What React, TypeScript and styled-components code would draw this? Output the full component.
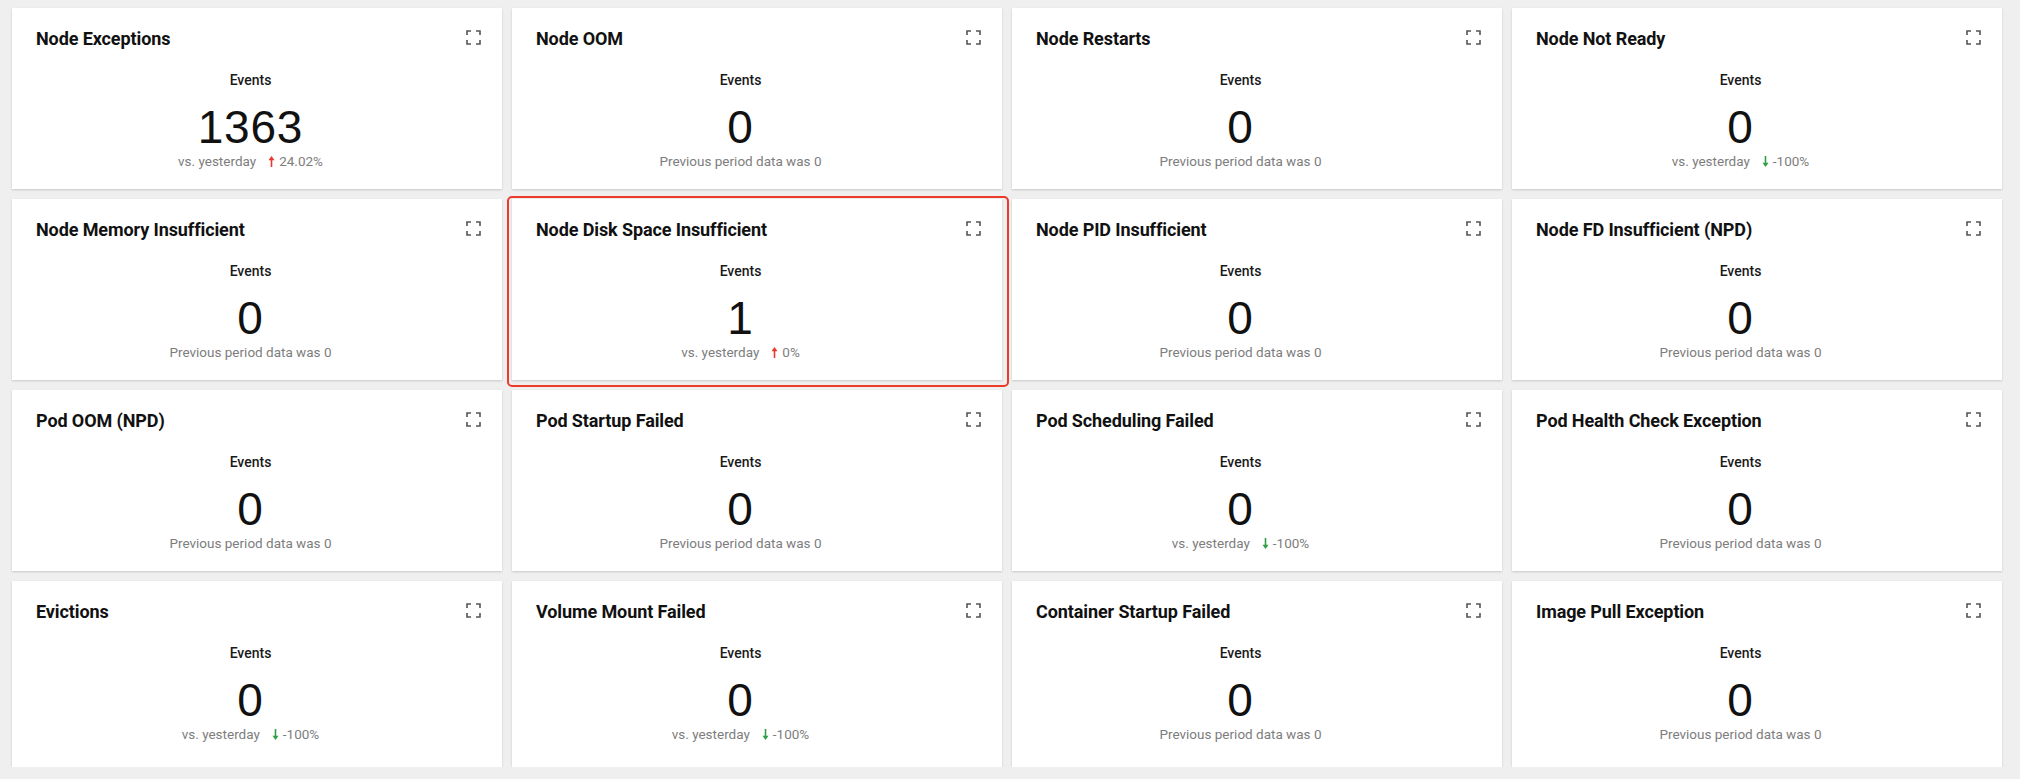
import React from "react";
import styled, { createGlobalStyle } from "styled-components";

const GlobalStyle = createGlobalStyle`
  html, body { margin: 0; padding: 0; background: #efefef; }
  body { font-family: Roboto, "Noto Sans", sans-serif; }
`;

type Trend = "up" | "down";

interface Metric {
  title: string;
  value: string;
  trend?: Trend;
  change?: string;
  highlight?: boolean;
}

const rows: Metric[][] = [
  [
    { title: "Node Exceptions", value: "1363", trend: "up", change: "24.02%" },
    { title: "Node OOM", value: "0" },
    { title: "Node Restarts", value: "0" },
    { title: "Node Not Ready", value: "0", trend: "down", change: "-100%" },
  ],
  [
    { title: "Node Memory Insufficient", value: "0" },
    { title: "Node Disk Space Insufficient", value: "1", trend: "up", change: "0%", highlight: true },
    { title: "Node PID Insufficient", value: "0" },
    { title: "Node FD Insufficient (NPD)", value: "0" },
  ],
  [
    { title: "Pod OOM (NPD)", value: "0" },
    { title: "Pod Startup Failed", value: "0" },
    { title: "Pod Scheduling Failed", value: "0", trend: "down", change: "-100%" },
    { title: "Pod Health Check Exception", value: "0" },
  ],
  [
    { title: "Evictions", value: "0", trend: "down", change: "-100%" },
    { title: "Volume Mount Failed", value: "0", trend: "down", change: "-100%" },
    { title: "Container Startup Failed", value: "0" },
    { title: "Image Pull Exception", value: "0" },
  ],
];

const Grid = styled.div`
  display: grid;
  grid-template-columns: repeat(4, 490px);
  grid-template-rows: 181px 181px 181px 186px;
  column-gap: 10px;
  row-gap: 10px;
  padding: 8px 18px 0 12px;
`;

const Card = styled.div`
  position: relative;
  background: #ffffff;
  box-shadow: 0 1px 2px rgba(0, 0, 0, 0.16);
  display: flex;
  flex-direction: column;
  padding: 19px 21px 0 24px;
`;

const Highlight = styled.div`
  position: absolute;
  top: -3px;
  left: -5px;
  right: -7px;
  bottom: -7px;
  border: 2.5px solid #ec3b2b;
  border-radius: 5px;
  pointer-events: none;
`;

const Header = styled.div`
  display: flex;
  align-items: center;
  justify-content: space-between;
  height: 24px;
`;

const Title = styled.div`
  font-family: Roboto, "Noto Sans", sans-serif;
  font-weight: 700;
  font-size: 18px;
  line-height: 24px;
  color: #111;
  letter-spacing: -0.1px;
`;

const ExpandButton = styled.span`
  display: flex;
  width: 15px;
  height: 15px;
  margin-top: -3px;
  color: #555;
`;

const Body = styled.div<{ $shift: number }>`
  display: flex;
  flex-direction: column;
  align-items: center;
  padding-right: ${(p) => p.$shift}px;
`;

const Label = styled.div`
  margin-top: 20px;
  font-family: Roboto, "Noto Sans", sans-serif;
  font-weight: 500;
  font-size: 14px;
  line-height: 18px;
  color: #1a1a1a;
`;

const Value = styled.div`
  margin-top: 14px;
  font-family: "Liberation Sans", Arial, sans-serif;
  font-size: 46px;
  line-height: 48px;
  letter-spacing: 0.8px;
  color: #111;
`;

const Sub = styled.div`
  margin-top: 2px;
  display: flex;
  align-items: center;
  font-family: Roboto, "Noto Sans", sans-serif;
  font-size: 13.5px;
  line-height: 16px;
  color: #7d7d7d;
`;

const Compare = styled.span`
  margin-right: 12px;
`;

const ArrowWrap = styled.span<{ $trend: Trend }>`
  display: inline-flex;
  margin-right: 4px;
  color: ${(p) => (p.$trend === "up" ? "#e8372c" : "#2ea043")};
`;

const ExpandIcon = () => (
  <svg width="15" height="15" viewBox="0 0 15 15" fill="none" stroke="currentColor" strokeWidth="1.6">
    <path d="M1 5V1h4M10 1h4v4M14 10v4h-4M5 14H1v-4" />
  </svg>
);

const Arrow = ({ trend }: { trend: Trend }) => (
  <ArrowWrap $trend={trend}>
    <svg width="7" height="11" viewBox="0 0 7 11" fill="currentColor">
      {trend === "up" ? (
        <>
          <path d="M3.5 0L6.5 4.2H0.5Z" />
          <rect x="2.7" y="3.5" width="1.6" height="7.5" />
        </>
      ) : (
        <>
          <path d="M3.5 11L6.5 6.8H0.5Z" />
          <rect x="2.7" y="0" width="1.6" height="7.5" />
        </>
      )}
    </svg>
  </ArrowWrap>
);

const MetricCard = ({ m, shift }: { m: Metric; shift: number }) => (
  <Card>
    {m.highlight && <Highlight />}
    <Header>
      <Title>{m.title}</Title>
      <ExpandButton>
        <ExpandIcon />
      </ExpandButton>
    </Header>
    <Body $shift={shift}>
      <Label>Events</Label>
      <Value>{m.value}</Value>
      <Sub>
        {m.trend ? (
          <>
            <Compare>vs. yesterday</Compare>
            <Arrow trend={m.trend} />
            <span>{m.change}</span>
          </>
        ) : (
          <span>Previous period data was 0</span>
        )}
      </Sub>
    </Body>
  </Card>
);

export default function App() {
  return (
    <>
      <GlobalStyle />
      <Grid>
        {rows.flatMap((row, r) =>
          row.map((m, c) => <MetricCard key={`${r}-${c}`} m={m} shift={c === 0 ? 16 : 36} />)
        )}
      </Grid>
    </>
  );
}
